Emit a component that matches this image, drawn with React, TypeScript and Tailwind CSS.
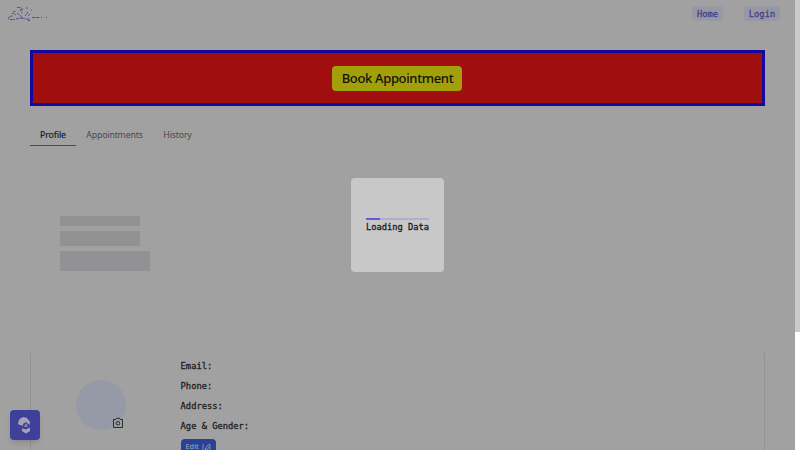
import React from "react";

const mono = "font-['DejaVu_Sans_Mono',monospace] [-webkit-text-stroke:0.28px_currentColor]";
const sans = "font-['Noto_Sans',sans-serif]";

function Logo() {
  return (
    <svg width="44" height="16" viewBox="0 0 44 16" fill="none" stroke="#3a3688" strokeWidth="0.8" className="mt-[6px]">
      <path d="M9 1.5h4M14 2v3M18 2h1.5M23 4h1M12 3l2 4M5 6l3-1M4 7l4 2M9 7l6 5M20 6l-3 4M22 8l-2 2" strokeDasharray="2.5 .8" />
      <path d="M0 14v-2l3-2h2M2 13.5h5M8 13l5-1 4 1M18 13h4M20 14.5h2M24 11.5h3M28 11.5h4M33 11.5h1M38 11.5h1" strokeDasharray="3 .7" />
    </svg>
  );
}

function Header() {
  return (
    <header className="flex h-[50px] items-start justify-between pl-2 pr-[15px]">
      <Logo />
      <nav className={`${mono} flex gap-[21px] pt-[6px] text-[8.75px] text-[#414086]`}>
        <span className="flex h-[15px] w-[31px] items-center justify-center rounded-sm bg-[#9898a5] pt-[2px]">Home</span>
        <span className="flex h-[15px] w-9 items-center justify-center rounded-sm bg-[#9898a5] pt-[2px]">Login</span>
      </nav>
    </header>
  );
}

function Tabs() {
  return (
    <div className="mt-[18px] flex h-[22px] text-[8.75px] leading-[22px] tracking-[-0.17px] text-[#484a50]">
      <div className="flex w-[46px] flex-col text-center font-medium text-[#171717]">
        <span className="h-[21px]">Profile</span>
        <span className="h-px bg-[#2448c8]" />
      </div>
      <div className="w-[77px] text-center">Appointments</div>
      <div className="w-[49px] text-center">History</div>
    </div>
  );
}

function ProfileCard() {
  return (
    <section className="mt-[78px] flex h-[160px] rounded-md border border-[#919293] border-t-[#9f9f9f]">
      <div className="relative ml-[45px] mt-[30px] h-[50px] w-[50px] shrink-0 rounded-full bg-[#969aa6]">
        <svg className="absolute left-[36px] top-[37px]" width="12" height="12" viewBox="0 0 12 12" fill="none" stroke="#1e1e1e" strokeWidth=".9">
          <path d="M1.5 2.5h2.2l.8-1.2h3l.8 1.2h2.2v8h-9z" />
          <circle cx="6" cy="6.3" r="1.8" />
        </svg>
      </div>
      <div className={`${mono} ml-[54.6px] pt-[6px] text-[8.75px] leading-5 text-[#1c1c1c]`}>
        <p>Email:</p>
        <p>Phone:</p>
        <p>Address:</p>
        <p>Age &amp; Gender:</p>
        <button className={`${sans} mt-[3px] flex h-[16px] w-[35px] items-center justify-center gap-[3px] rounded-sm bg-[#2a4296] text-[7.5px] leading-none text-[#a4a9b9] [-webkit-text-stroke:0]`}>
          Edit
          <svg width="9" height="9" viewBox="0 0 9 9" fill="none" stroke="#a4a9b9" strokeWidth=".7">
            <path d="M1 1v7M3.5 8.3V5.5L6 2l2-.8V8.3M3.5 5.5l2 1L7.5 3" />
          </svg>
        </button>
      </div>
    </section>
  );
}

export default function App() {
  return (
    <div className={`${sans} relative flex h-[450px] w-[800px] overflow-hidden bg-[#a1a1a1]`}>
      <main className="w-[795px] shrink-0">
        <Header />
        <div className="ml-[30px] w-[735px]">
          <div className="flex h-14 items-center justify-center border-[3px] border-[#1309a0] bg-[#a00e0e] pr-px">
            <button className="h-[25px] w-[130px] whitespace-nowrap rounded bg-[#a2a00a] pl-px text-[13px] font-medium leading-[25px] tracking-[-0.35px] text-[#111108]">Book Appointment</button>
          </div>
          <Tabs />
          <div className="ml-[30px] mt-[70px] flex flex-col gap-[5px]">
            <div className="h-[10px] w-20 bg-[#929294]" />
            <div className="h-[15px] w-20 bg-[#929294]" />
            <div className="h-5 w-[90px] bg-[#929294]" />
          </div>
          <ProfileCard />
        </div>
      </main>
      <aside className="w-[5px] shrink-0 bg-white">
        <div className="h-[332px] bg-[#cacaca]" />
      </aside>
      <div className="absolute left-[351px] top-[178px] flex h-[94px] w-[93px] flex-col items-center rounded bg-[#c8c8c8] pt-10">
        <div className="h-[2px] w-[63px] bg-[#b2adce]">
          <div className="h-full w-[14px] bg-[#6557df]" />
        </div>
        <div className={`${mono} mt-px whitespace-nowrap text-[8.75px] leading-[12px] text-[#171717]`}>Loading Data</div>
      </div>
      <div className="absolute left-[10px] top-[410px] flex h-[30px] w-[30px] items-center justify-center rounded bg-[#40409a] shadow-md">
        <svg width="14" height="18" viewBox="0 0 14 18">
          <path d="M0 7L1.5 3 5 1l4 1 3 4-.5 3L8 6 5 8v2L3 9 1 9zM4 12.5l4 1 4-2v3.5L8 17.5 4 15z" fill="#a4a4b6" />
          <path d="M8 7.3l1.9 3.4H6.1z" fill="#a4a4b6" />
          <path d="M8 9v1" stroke="#40409a" strokeWidth=".8" />
        </svg>
      </div>
    </div>
  );
}
